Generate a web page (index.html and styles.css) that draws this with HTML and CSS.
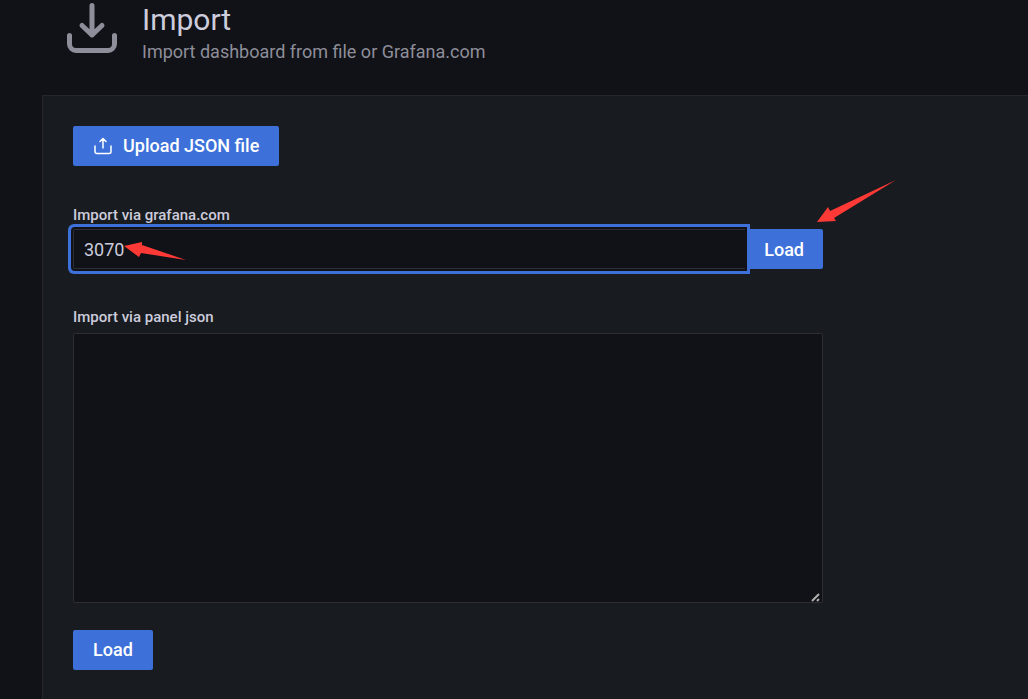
FILE: index.html
```html
<!DOCTYPE html>
<html lang="en">
<head>
    <meta charset="UTF-8">
    <meta name="viewport" content="width=device-width, initial-scale=1.0">
    <title>Import - Grafana</title>
    <link rel="stylesheet" href="styles.css">
</head>
<body>
    <header class="page-header">
        <svg class="page-icon" viewBox="0 0 60 56" aria-hidden="true">
            <path d="M30 5.500V35M20 25.500L30 35L40 25.500M7.500 35.500V44a6.500 6.500 0 0 0 6.500 6.500H46a6.500 6.500 0 0 0 6.500-6.500V35.500"/>
        </svg>
        <div class="page-heading">
            <h1>Import</h1>
            <p>Import dashboard from file or Grafana.com</p>
        </div>
    </header>
    <main class="page-content">
        <form class="import-form">
            <button type="button" class="btn upload-btn">
                <svg class="btn-icon" viewBox="0 0 20 20" aria-hidden="true">
                    <path d="M10 13V4M7 6.500L10 3.500L13 6.500M2 11V16.500a2 2 0 0 0 2 2H16a2 2 0 0 0 2-2V11"/>
                </svg>
                Upload JSON file
            </button>
            <div class="field">
                <label for="gcom">Import via grafana.com</label>
                <div class="input-row">
                    <input type="text" id="gcom" class="focused" value="3070">
                    <button type="button" class="btn btn-attached">Load</button>
                    <svg class="arrow arrow-value" viewBox="0 0 62 18" aria-hidden="true">
                        <polygon points="0,4 18,0 18,3 62,18 17,11 15,15"/>
                    </svg>
                    <svg class="arrow arrow-load" viewBox="0 0 79 42" aria-hidden="true">
                        <polygon points="0,42 11,27 13,31 79,0 17,38 19,41"/>
                    </svg>
                </div>
            </div>
            <div class="field json-field">
                <label for="json">Import via panel json</label>
                <div class="json-box">
                    <textarea id="json" rows="10"></textarea>
                    <svg class="grip" viewBox="0 0 10 10" aria-hidden="true">
                        <path d="M1 9L8 2M6 9L8 7"/>
                    </svg>
                </div>
            </div>
            <button type="button" class="btn">Load</button>
        </form>
    </main>
</body>
</html>
```
FILE: styles.css
```css
* {
    box-sizing: border-box;
}
body {
    margin: 0;
    min-height: 100vh;
    display: flex;
    flex-direction: column;
    font-family: Roboto, "Liberation Sans", sans-serif;
    font-size: 18px;
    color: #ccccdc;
    background-color: #111217;
}
.page-header {
    display: flex;
    gap: 20px;
    padding: 0 62px 32px;
}
.page-icon {
    width: 60px;
    height: 56px;
    fill: none;
    stroke: #8e8e9a;
    stroke-width: 5;
    stroke-linecap: round;
    stroke-linejoin: round;
}
.page-heading h1 {
    margin: 0;
    font-size: 30px;
    font-weight: 400;
    line-height: 40px;
}
.page-heading p {
    margin: 0;
    line-height: 23px;
    color: #8e8e9a;
}
.page-content {
    flex: 1;
    margin-left: 42px;
    padding: 30px;
    border: 1px solid #25272c;
    border-width: 1px 0 0 1px;
    background-color: #181b1f;
}
.import-form {
    max-width: 750px;
}
.btn {
    display: flex;
    align-items: center;
    height: 40px;
    padding: 0 20px 2px;
    border: none;
    border-radius: 2px;
    font: inherit;
    font-weight: 500;
    color: #fff;
    background-color: #3d71d9;
    cursor: pointer;
}
.btn:hover {
    background-color: #5a86de;
}
.upload-btn {
    gap: 10px;
    margin-bottom: 39px;
}
.btn-icon {
    width: 20px;
    height: 20px;
    fill: none;
    stroke: #fff;
    stroke-width: 1.5;
    stroke-linecap: round;
    stroke-linejoin: round;
}
.field {
    margin-bottom: 38px;
}
.field label {
    display: block;
    margin-bottom: 4px;
    font-size: 15px;
    font-weight: 500;
    line-height: 20px;
}
.input-row {
    position: relative;
    display: flex;
}
.input-row input {
    flex: 1;
    min-width: 0;
    height: 40px;
    padding: 0 10px;
    border: 1px solid #2c2e33;
    border-right: none;
    border-radius: 2px 0 0 2px;
    outline: none;
    font: inherit;
    color: #ccccdc;
    background-color: #111217;
}
.input-row input:focus,
.input-row input.focused {
    z-index: 1;
    box-shadow: 0 0 0 2px #111217, 0 0 0 5px #3d71d9;
}
.btn-attached {
    padding: 0 19px;
    border-radius: 0 2px 2px 0;
}
.json-box {
    position: relative;
}
textarea {
    display: block;
    width: 100%;
    height: 270px;
    padding: 8px 10px;
    border: 1px solid #2c2e33;
    border-radius: 2px;
    outline: none;
    font: inherit;
    color: #ccccdc;
    background-color: #111217;
    resize: vertical;
}
textarea::-webkit-resizer {
    background-color: transparent;
}
.json-field {
    margin-bottom: 27px;
}
.json-field label {
    margin-bottom: 6px;
}
.grip {
    position: absolute;
    right: 2px;
    bottom: 1px;
    width: 10px;
    height: 10px;
    fill: none;
    stroke: #b0b0b0;
    stroke-width: 2;
    pointer-events: none;
}
.arrow {
    position: absolute;
    z-index: 2;
    fill: #ff3a36;
    pointer-events: none;
}
.arrow-value {
    top: 13px;
    left: 51px;
    width: 62px;
    height: 18px;
}
.arrow-load {
    top: -49px;
    right: -73px;
    width: 79px;
    height: 42px;
}
```
